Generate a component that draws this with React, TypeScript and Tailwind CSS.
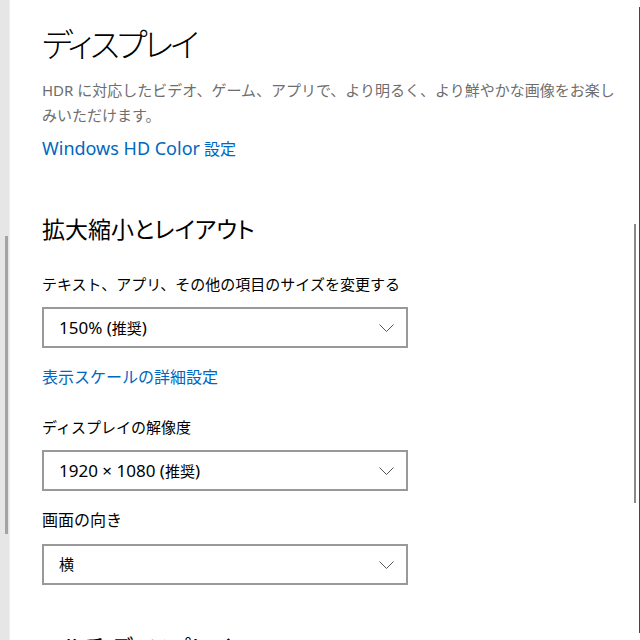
import React from "react";

const font = {
  fontFamily: '"Noto Sans", "Noto Sans CJK JP", sans-serif',
};

function Chevron() {
  return (
    <svg width="15" height="8" viewBox="0 0 15 8" fill="none" className="shrink-0">
      <path d="M0.5 0.5 L7.5 7.5 L14.5 0.5" stroke="#555" strokeWidth="1" />
    </svg>
  );
}

function Lat({ children, big }: { children: React.ReactNode; big?: boolean }) {
  return <span className={big ? "text-[18px]" : "text-[17px]"}>{children}</span>;
}

function Select({ children }: { children: React.ReactNode }) {
  return (
    <div className="w-[366px] h-[41px] border-2 border-[#999999] bg-white flex items-center justify-between pl-[15px] pr-[12px]">
      <span className="text-[15px] text-black leading-none">{children}</span>
      <Chevron />
    </div>
  );
}

export default function App() {
  return (
    <div className="relative h-[640px] w-[640px] overflow-hidden bg-white flex" style={font}>
      {/* left pane edge */}
      <div className="relative w-[10px] h-full bg-[#e6e6e6] border-r border-[#efefef]">
        <div className="absolute left-[5px] top-[236px] w-[3px] h-[298px] bg-[#a3a3a3]" />
      </div>

      {/* content */}
      <main className="flex-1 pl-[32px] pt-[23px]">
        <h1
          className="text-[33px] leading-[44px] text-black font-light tracking-[-3px]"
          style={{ fontFeatureSettings: '"palt"' }}
        >
          ディスプレイ
        </h1>
        <p className="mt-[11px] text-[15px] leading-[25px] text-[#6e6e6e] pr-[20px]">
          HDR に対応したビデオ、ゲーム、アプリで、より明るく、より鮮やかな画像をお楽しみいただけます。
        </p>
        <a className="block mt-[8px] text-[16px] leading-[25px] text-[#0067c0]">
          <Lat big>Windows HD Color</Lat> 設定
        </a>

        <h2 className="mt-[51px] text-[23px] leading-[32px] text-black" style={{ fontFeatureSettings: '"palt"' }}>
          拡大縮小とレイアウト
        </h2>
        <div className="mt-[27px] text-[15px] leading-[25px] text-black">テキスト、アプリ、その他の項目のサイズを変更する</div>
        <div className="mt-[10px]">
          <Select>
            <Lat>150% (</Lat>推奨<Lat>)</Lat>
          </Select>
        </div>
        <a className="block mt-[17px] text-[16px] leading-[25px] text-[#0067c0]">表示スケールの詳細設定</a>

        <div className="mt-[25px] text-[15px] leading-[25px] text-black">ディスプレイの解像度</div>
        <div className="mt-[10px]">
          <Select>
            <Lat>1920 × 1080 (</Lat>推奨<Lat>)</Lat>
          </Select>
        </div>

        <div className="mt-[17px] text-[16px] leading-[25px] text-black">画面の向き</div>
        <div className="mt-[11px]">
          <Select>横</Select>
        </div>

        <h2 className="mt-[46px] text-[23px] leading-[32px] text-black" style={{ fontFeatureSettings: '"palt"' }}>
          マルチ ディスプレイ
        </h2>
      </main>

      {/* right scrollbar and window edge */}
      <div className="absolute right-[4px] top-[224px] w-[2px] h-[279px] bg-[#8a8a8a]" />
      <div className="absolute right-0 top-[7px] w-[1px] h-[626px] bg-[#2b4a6b]" />
    </div>
  );
}
